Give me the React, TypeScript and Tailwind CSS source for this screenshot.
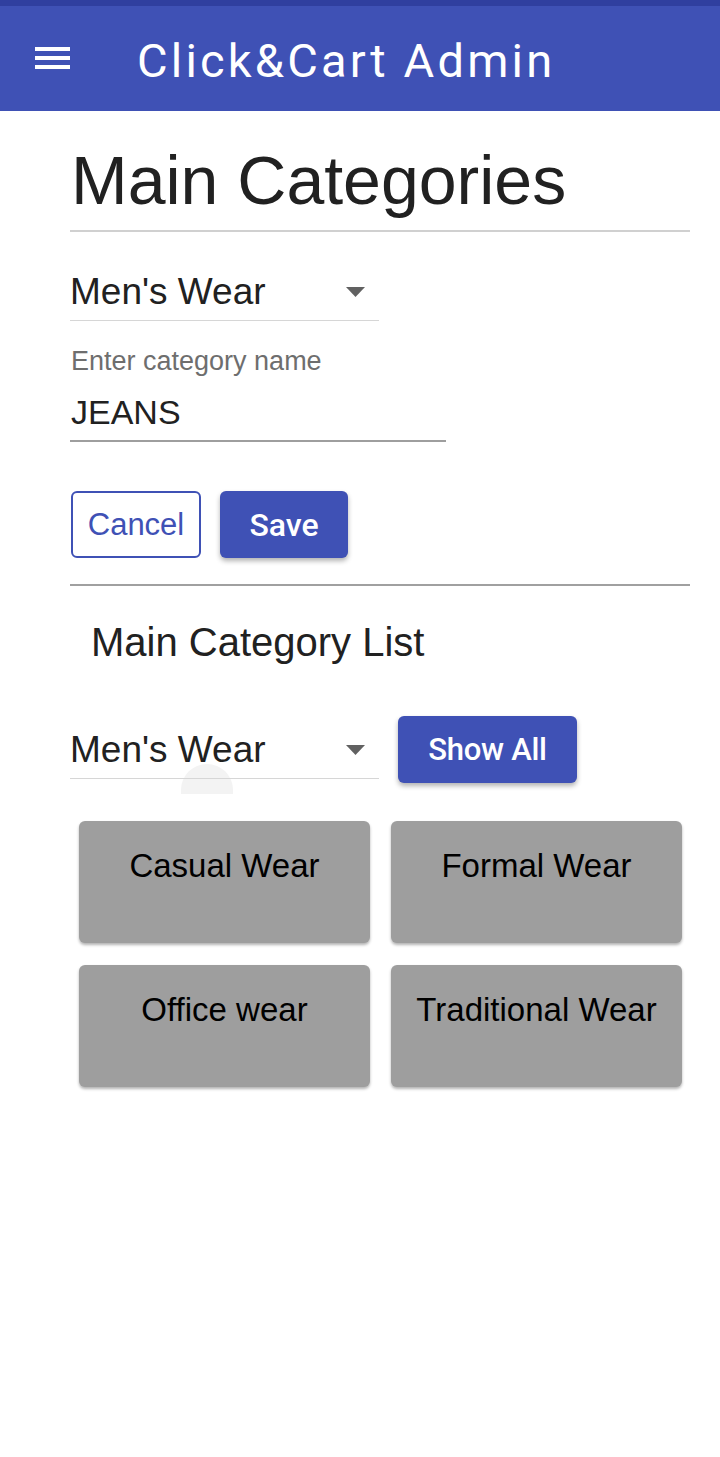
import React from "react";

function Arrow() {
  return (
    <svg width="19" height="10" viewBox="0 0 19 10" className="mb-[13px] mr-[14px]">
      <path d="M0 0 L19 0 L9.5 10 Z" fill="#616161" />
    </svg>
  );
}

function Select() {
  return (
    <div className="w-[309px] pb-[10px] border-b border-[#d6d6d6] flex items-end justify-between">
      <span className="text-[37px] leading-none text-[#212121]">Men's Wear</span>
      <Arrow />
    </div>
  );
}

function Card({ label }: { label: string }) {
  return (
    <div className="h-[122px] bg-[#9e9e9e] rounded-[6px] shadow-[0_2px_3px_rgba(0,0,0,0.3)] flex justify-center pt-[28px]">
      <span className="text-[33px] leading-none text-black">{label}</span>
    </div>
  );
}

export default function App() {
  return (
    <div className="w-[720px] min-h-[1457px] bg-white" style={{ fontFamily: "'Liberation Sans', Arial, sans-serif" }}>
      <div className="h-[6px] bg-[#303f9f]" />
      <div className="h-[105px] bg-[#3f51b5] flex items-center">
        <div className="ml-[35px] flex flex-col gap-[5px] w-[35px] mt-[-1px]">
          <div className="h-[4px] bg-white" />
          <div className="h-[4px] bg-white" />
          <div className="h-[4px] bg-white" />
        </div>
        <span className="ml-[67px] text-white text-[47px] leading-none tracking-[3.2px] mt-[3px]" style={{ fontFamily: "Roboto, sans-serif" }}>Click&amp;Cart Admin</span>
      </div>
      <div className="px-[70px] pr-[30px]">
        <h1 className="text-[68px] leading-none text-[#212121] ml-[1px] mt-[35px]">Main Categories</h1>
        <div className="h-[2px] bg-[#d0d0d0] mt-[16px]" />
        <div className="mt-[41px]">
          <Select />
        </div>
        <div className="mt-[27px] text-[27px] leading-none text-[#6e6e6e] ml-[1px]">Enter category name</div>
        <div className="w-[376px] border-b-2 border-[#9e9e9e] mt-[20px] pb-[9px]">
          <span className="text-[34px] leading-none text-[#212121] ml-[1px]">JEANS</span>
        </div>
        <div className="flex gap-[19px] mt-[49px] ml-[1px]">
          <button className="w-[130px] h-[67px] border-2 border-[#3f51b5] rounded-[6px] text-[#3f51b5] text-[31px] leading-none bg-white">Cancel</button>
          <button className="w-[128px] h-[67px] rounded-[6px] bg-[#3f51b5] text-white text-[32px] font-medium leading-none shadow-[0_3px_5px_rgba(0,0,0,0.3)]" style={{ fontFamily: "Roboto, sans-serif" }}>Save</button>
        </div>
        <div className="h-[2px] bg-[#a0a0a0] mt-[26px]" />
        <h2 className="text-[40px] leading-none text-[#212121] ml-[21px] mt-[36px]">Main Category List</h2>
        <div className="flex items-start gap-[19px] mt-[54px]">
          <div className="relative mt-[15px]">
            <div className="absolute left-[111px] top-[33px] w-[52px] h-[30px] rounded-t-full bg-[#f3f3f3]" />
            <div className="relative">
              <Select />
            </div>
          </div>
          <button className="w-[179px] h-[67px] rounded-[6px] bg-[#3f51b5] text-white text-[31px] font-medium leading-none shadow-[0_3px_5px_rgba(0,0,0,0.3)] tracking-[-0.3px]" style={{ fontFamily: "Roboto, sans-serif" }}>Show All</button>
        </div>
        <div className="grid grid-cols-2 gap-x-[21px] gap-y-[22px] mt-[38px] ml-[9px] mr-[8px]">
          <Card label="Casual Wear" />
          <Card label="Formal Wear" />
          <Card label="Office wear" />
          <Card label="Traditional Wear" />
        </div>
      </div>
    </div>
  );
}
